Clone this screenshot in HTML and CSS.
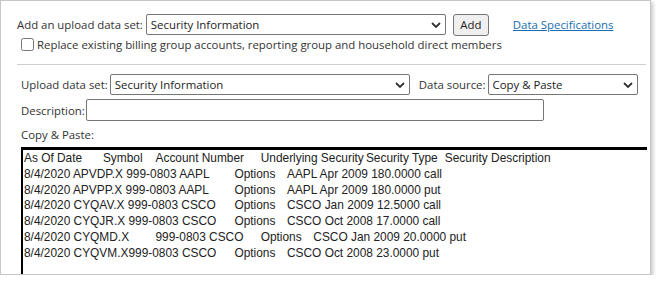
FILE: index.html
```html
<!DOCTYPE html>
<html lang="en">
<head>
<meta charset="UTF-8" />
<title>Upload Data Set</title>
<link rel="stylesheet" href="styles.css">
</head>
<body>

<!-- Upload panel -->
<div class="upPanel">

  <div class="upRow">
    <label class="upLabel" for="upSet">Add an upload data set:</label>
    <span class="upSelectWrap upSelectWide">
      <select id="upSet" class="upSelect"><option>Security Information</option></select>
      <svg class="upChevron" width="10" height="6" viewBox="0 0 10 6"><path d="M1 1l4 4 4-4" fill="none" stroke="#333" stroke-width="1.8"/></svg>
    </span>
    <button class="upBtn" type="button">Add</button>
    <a class="upLink" href="#">Data Specifications</a>
  </div>

  <div class="upCheckRow">
    <input type="checkbox" id="upReplace" class="upCheck" />
    <label for="upReplace">Replace existing billing group accounts, reporting group and household direct members</label>
  </div>

  <div class="upDivider"></div>

  <div class="upForm">
    <div class="upRow upRowSrc">
      <label class="upLabel" for="upSet2">Upload data set:</label>
      <span class="upSelectWrap upSelectWide upSelectTight">
        <select id="upSet2" class="upSelect"><option>Security Information</option></select>
        <svg class="upChevron" width="10" height="6" viewBox="0 0 10 6"><path d="M1 1l4 4 4-4" fill="none" stroke="#333" stroke-width="1.8"/></svg>
      </span>
      <label class="upLabel upLabelSrc" for="upSource">Data source:</label>
      <span class="upSelectWrap upSelectShort upSelectTight">
        <select id="upSource" class="upSelect"><option>Copy &amp; Paste</option></select>
        <svg class="upChevron" width="10" height="6" viewBox="0 0 10 6"><path d="M1 1l4 4 4-4" fill="none" stroke="#333" stroke-width="1.8"/></svg>
      </span>
    </div>

    <div class="upRow upRowDesc">
      <label class="upLabel" for="upDesc">Description:</label>
      <input type="text" id="upDesc" class="upInput" />
    </div>

    <div class="upPasteLabel">Copy &amp; Paste:</div>

    <textarea class="upPaste" spellcheck="false">As Of Date	Symbol	Account Number	Underlying Security	Security Type	Security Description
8/4/2020 APVDP.X 999-0803 AAPL	Options	AAPL Apr 2009 180.0000 call
8/4/2020 APVPP.X 999-0803 AAPL	Options	AAPL Apr 2009 180.0000 put
8/4/2020 CYQAV.X 999-0803 CSCO	Options	CSCO Jan 2009 12.5000 call
8/4/2020 CYQJR.X 999-0803 CSCO	Options	CSCO Oct 2008 17.0000 call
8/4/2020 CYQMD.X	999-0803 CSCO	Options	CSCO Jan 2009 20.0000 put
8/4/2020 CYQVM.X999-0803 CSCO	Options	CSCO Oct 2008 23.0000 put
</textarea>
  </div>

</div>

</body>
</html>
```

FILE: styles.css
```css
body {
  margin: 0;
  background: #fff;
  font-family: "Open Sans", "Noto Sans", sans-serif;
  font-size: 11.4px;
  color: #333;
}

/* Outer panel */
.upPanel {
  box-sizing: border-box;
  width: 651px;
  height: 275px;
  padding: 13px 4px 0 16px;
  border: 1px solid #c6c6c6;
  box-shadow: 2px 2px 4px rgba(0,0,0,0.22);
  overflow: hidden;
}

.upRow {
  display: flex;
  align-items: center;
  height: 21px;
}

.upLabel {
  white-space: nowrap;
}

/* Select with chevron */
.upSelectWrap {
  position: relative;
  display: inline-block;
  margin-left: 3px;
}

.upSelectTight {
  margin-left: 2px;
}

.upSelect {
  appearance: none;
  box-sizing: border-box;
  width: 100%;
  height: 21px;
  margin: 0;
  padding: 0 4px;
  border: 1px solid #767676;
  border-radius: 2px;
  background: #fff;
  font-family: inherit;
  font-size: 11.4px;
  color: #222;
}

.upChevron {
  position: absolute;
  right: 5px;
  top: 8px;
  pointer-events: none;
}

.upSelectWide { width: 300px; }
.upSelectShort { width: 150px; }

.upBtn {
  box-sizing: border-box;
  width: 36px;
  height: 22px;
  margin-left: 7px;
  padding: 0;
  border: 1px solid #767676;
  border-radius: 3px;
  background: #efefef;
  font-family: inherit;
  font-size: 11.4px;
  color: #222;
}

.upLink {
  margin-left: 24px;
  color: #1a6db3;
  text-decoration: underline;
}

/* Checkbox row */
.upCheckRow {
  display: flex;
  align-items: center;
  height: 15px;
  margin-top: 2px;
  padding-left: 4px;
}

.upCheck {
  width: 13px;
  height: 13px;
  margin: 0 3px 0 0;
}

.upDivider {
  margin-top: 12px;
  border-top: 1px solid #cfcfcf;
}

/* Lower form */
.upForm {
  padding-left: 4px;
}

.upRowSrc {
  margin-top: 9px;
}

.upLabelSrc {
  margin-left: 9px;
}

.upRowDesc {
  margin-top: 4px;
  height: 22px;
}

.upInput {
  box-sizing: border-box;
  width: 458px;
  height: 22px;
  margin: 0 0 0 1px;
  border: 1px solid #767676;
  border-radius: 2px;
}

.upPasteLabel {
  margin-top: 5px;
  line-height: 17px;
}

.upPaste {
  display: block;
  box-sizing: border-box;
  width: 626px;
  height: 150px;
  margin-top: 4px;
  padding: 1px 1px;
  border: none;
  border-top: 3px solid #000;
  border-left: 2px solid #000;
  outline: none;
  resize: none;
  overflow: hidden;
  font-family: "Liberation Sans", Arial, sans-serif;
  font-size: 11.9px;
  line-height: 15.8px;
  color: #222;
  tab-size: 26.3px;
  white-space: pre;
}
```
